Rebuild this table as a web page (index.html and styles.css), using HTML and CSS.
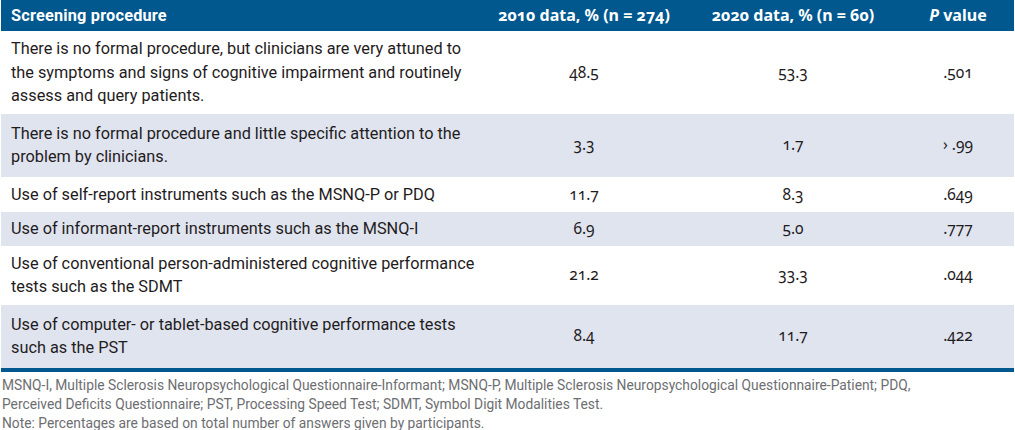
FILE: index.html
```html
<!DOCTYPE html>
<html lang="en">
<head>
<meta charset="utf-8">
<title>Screening procedure</title>
<link rel="stylesheet" href="styles.css">
</head>
<body>
<div class="wrap">
  <div class="table">
    <div class="row head">
      <div class="cell first">Screening procedure</div>
      <div class="cell num">2010 data, % (n = 274)</div>
      <div class="cell num">2020 data, % (n = 60)</div>
      <div class="cell num"><i>P</i> value</div>
    </div>
    <div class="row">
      <div class="cell first">There is no formal procedure, but clinicians are very attuned to the symptoms and signs of cognitive impairment and routinely assess and query patients.</div>
      <div class="cell num">48.5</div>
      <div class="cell num">53.3</div>
      <div class="cell num">.501</div>
    </div>
    <div class="row shade tall">
      <div class="cell first">There is no formal procedure and little specific attention to the problem by clinicians.</div>
      <div class="cell num">3.3</div>
      <div class="cell num">1.7</div>
      <div class="cell num">› .99</div>
    </div>
    <div class="row">
      <div class="cell first">Use of self-report instruments such as the MSNQ-P or PDQ</div>
      <div class="cell num">11.7</div>
      <div class="cell num">8.3</div>
      <div class="cell num">.649</div>
    </div>
    <div class="row shade short">
      <div class="cell first">Use of informant-report instruments such as the MSNQ-I</div>
      <div class="cell num">6.9</div>
      <div class="cell num">5.0</div>
      <div class="cell num">.777</div>
    </div>
    <div class="row">
      <div class="cell first">Use of conventional person-administered cognitive performance tests such as the SDMT</div>
      <div class="cell num">21.2</div>
      <div class="cell num">33.3</div>
      <div class="cell num">.044</div>
    </div>
    <div class="row shade tall last">
      <div class="cell first">Use of computer- or tablet-based cognitive performance tests such as the PST</div>
      <div class="cell num">8.4</div>
      <div class="cell num">11.7</div>
      <div class="cell num">.422</div>
    </div>
  </div>
  <div class="notes">
    <p>MSNQ-I, Multiple Sclerosis Neuropsychological Questionnaire-Informant; MSNQ-P, Multiple Sclerosis Neuropsychological Questionnaire-Patient; PDQ, Perceived Deficits Questionnaire; PST, Processing Speed Test; SDMT, Symbol Digit Modalities Test.</p>
    <p>Note: Percentages are based on total number of answers given by participants.</p>
  </div>
</div>
</body>
</html>
```

FILE: styles.css
```css
* { box-sizing: border-box; }
html, body {
  margin: 0;
  padding: 0;
  background: #ffffff;
}
body {
  font-family: Roboto, "Liberation Sans", sans-serif;
  color: #1f1c1d;
}
.wrap {
  padding: 0 1px;
  width: 1015px;
}
.table {
  display: flex;
  flex-direction: column;
}
.row {
  display: grid;
  grid-template-columns: 483px 200px 218px 112px;
  align-items: center;
  background: #ffffff;
  font-size: 16.3px;
  line-height: 23.5px;
}
.row.shade {
  background: #dfe4ef;
}
.cell {
  padding: 6px 10px;
}
.cell.first {
  padding-right: 2px;
}
.row.tall .cell {
  padding-top: 8px;
  padding-bottom: 8px;
}
.row.short .cell {
  padding-top: 5px;
  padding-bottom: 5px;
}
.row.last {
  border-bottom: 4px solid #00588f;
}
.cell.num {
  text-align: center;
  font-family: "Noto Sans", Roboto, sans-serif;
  font-variant-numeric: oldstyle-nums;
  font-size: 15.5px;
}
.row.head {
  background: #00588f;
  color: #ffffff;
  font-weight: 700;
}
.row.head .cell {
  padding-top: 4px;
  padding-bottom: 3.5px;
}
.row.head .cell.first {
  letter-spacing: 0.2px;
}
.row.head .cell.num {
  font-size: 16px;
}
.notes {
  padding: 4px 0 0 1px;
  color: #6d6e71;
  font-size: 13.8px;
  line-height: 19px;
}
.notes p {
  margin: 0;
  max-width: 935px;
}
```
